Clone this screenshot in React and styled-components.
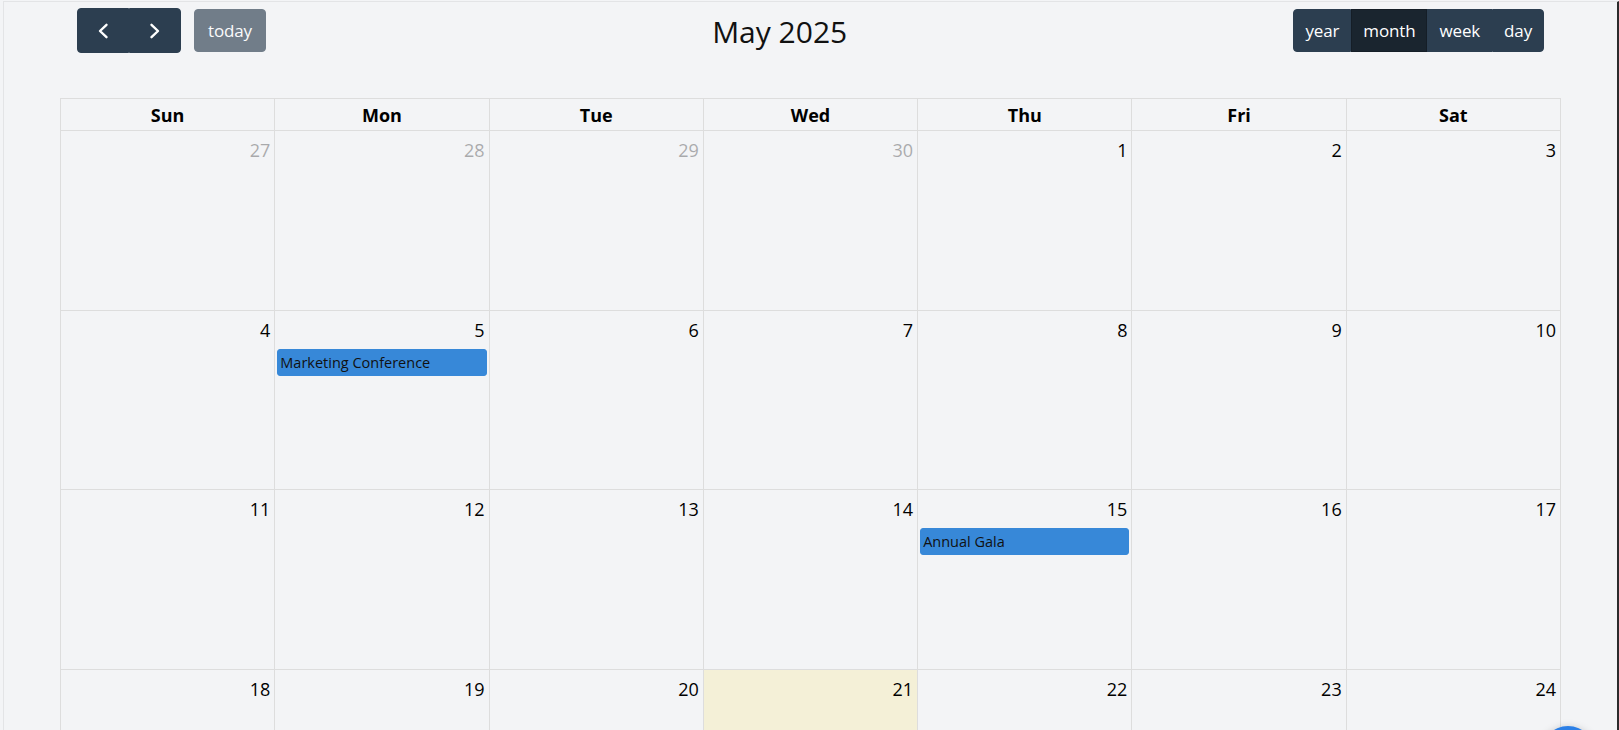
import React from "react";
import styled, { createGlobalStyle, css } from "styled-components";

const GlobalStyle = createGlobalStyle`
  html, body {
    margin: 0;
    padding: 0;
    background: #f3f4f6;
    overflow: hidden;
  }
  body {
    font-family: "Open Sans", "Noto Sans", "Liberation Sans", sans-serif;
    color: #111;
  }
  * { box-sizing: border-box; }
`;

const Frame = styled.div`
  margin: 1px 0 0 3px;
  height: 729px;
  overflow: hidden;
  border-top: 1px solid #e3e4e6;
  border-left: 1px solid #e3e4e6;
  border-right: 2px solid #2b2b2b;
  padding: 6px 56px 0 56px;
`;

const Toolbar = styled.div`
  display: flex;
  align-items: center;
  justify-content: space-between;
  height: 45px;
  margin: 0 17px 45px 17px;
`;

const Chunk = styled.div`
  display: flex;
  align-items: center;
  gap: 13px;
`;

const Title = styled.h2`
  margin: 0;
  padding-top: 2px;
  font-size: 30px;
  font-weight: 400;
  line-height: 1;
  color: #111;
`;

const Group = styled.div`
  display: inline-flex;
  align-items: stretch;
  & > button {
    border-radius: 0;
  }
  & > button:first-child {
    border-top-left-radius: 4px;
    border-bottom-left-radius: 4px;
  }
  & > button:last-child {
    border-top-right-radius: 4px;
    border-bottom-right-radius: 4px;
  }
`;

const Button = styled.button`
  font-family: inherit;
  font-size: 17px;
  letter-spacing: -0.15px;
  line-height: 27px;
  padding: 7px ${(p) => (p.$tight ? "11px" : "12px")};
  color: #fff;
  background: #2c3e50;
  border: 1px solid #2c3e50;
  border-radius: 4px;
  cursor: pointer;
  ${(p) =>
    p.$active &&
    css`
      background: #1a252f;
      border-color: #151e27;
    `}
  ${(p) =>
    p.$disabled &&
    css`
      opacity: 0.65;
      cursor: default;
      padding: 7px 13px;
    `}
`;

const IconButton = styled(Button)`
  width: 52px;
  height: 45px;
  padding: 0;
  display: flex;
  align-items: center;
  justify-content: center;
`;

const Grid = styled.div`
  display: grid;
  grid-template-columns: repeat(7, 1fr);
  border-top: 1px solid #dddddd;
  border-left: 1px solid #dddddd;
`;

const HeadCell = styled.div`
  padding: 3px 4px 1px 4px;
  text-align: center;
  font-weight: 700;
  font-size: 18px;
  line-height: 27px;
  color: #000;
  border-right: 1px solid #dddddd;
  border-bottom: 1px solid #dddddd;
`;

const DayCell = styled.div`
  height: 179.5px;
  border-right: 1px solid #dddddd;
  border-bottom: 1px solid #dddddd;
  background: ${(p) => (p.$today ? "#f4f0d7" : "transparent")};
  display: flex;
  flex-direction: column;
`;

const DayNumber = styled.div`
  padding: 6px 4px 2px 4px;
  text-align: right;
  font-size: 18px;
  line-height: 27px;
  color: #000;
  opacity: ${(p) => (p.$other ? 0.3 : 1)};
`;

const Event = styled.div`
  margin: 3px 2px 0 2px;
  padding: 1px 2px;
  background: #3788d8;
  border: 1px solid #3788d8;
  border-radius: 3px;
  font-size: 14.5px;
  line-height: 23px;
  color: #111;
  white-space: nowrap;
  overflow: hidden;
`;

const Fab = styled.button`
  position: fixed;
  top: 726px;
  left: 1540px;
  width: 56px;
  height: 56px;
  border-radius: 50%;
  border: none;
  background: #2b7fe6;
  box-shadow: 0 2px 8px rgba(0, 0, 0, 0.25);
`;

const Chevron = ({ dir }) => (
  <svg width="12" height="16" viewBox="0 0 12 16" fill="none">
    <polyline
      points={dir === "left" ? "9.5,1.8 3,8 9.5,14.2" : "2.5,1.8 9,8 2.5,14.2"}
      stroke="#fff"
      strokeWidth="2.4"
      strokeLinecap="round"
      strokeLinejoin="round"
    />
  </svg>
);

const dayNames = ["Sun", "Mon", "Tue", "Wed", "Thu", "Fri", "Sat"];

const weeks = [
  [[27, true], [28, true], [29, true], [30, true], [1], [2], [3]],
  [[4], [5], [6], [7], [8], [9], [10]],
  [[11], [12], [13], [14], [15], [16], [17]],
  [[18], [19], [20], [21], [22], [23], [24]],
];

const events = {
  5: "Marketing Conference",
  15: "Annual Gala",
};

const views = ["year", "month", "week", "day"];

export default function App() {
  return (
    <>
      <GlobalStyle />
      <Frame>
        <Toolbar>
          <Chunk>
            <Group>
              <IconButton aria-label="prev">
                <Chevron dir="left" />
              </IconButton>
              <IconButton aria-label="next">
                <Chevron dir="right" />
              </IconButton>
            </Group>
            <Button $disabled>today</Button>
          </Chunk>
          <Title>May 2025</Title>
          <Chunk>
            <Group>
              {views.map((v) => (
                <Button key={v} $tight $active={v === "month"}>
                  {v}
                </Button>
              ))}
            </Group>
          </Chunk>
        </Toolbar>
        <Grid>
          {dayNames.map((d) => (
            <HeadCell key={d}>{d}</HeadCell>
          ))}
          {weeks.map((week, wi) =>
            week.map(([n, other]) => (
              <DayCell key={`${wi}-${n}`} $today={!other && n === 21 && wi === 3}>
                <DayNumber $other={other}>{n}</DayNumber>
                {!other && events[n] && <Event>{events[n]}</Event>}
              </DayCell>
            ))
          )}
        </Grid>
      </Frame>
      <Fab aria-label="add" />
    </>
  );
}
